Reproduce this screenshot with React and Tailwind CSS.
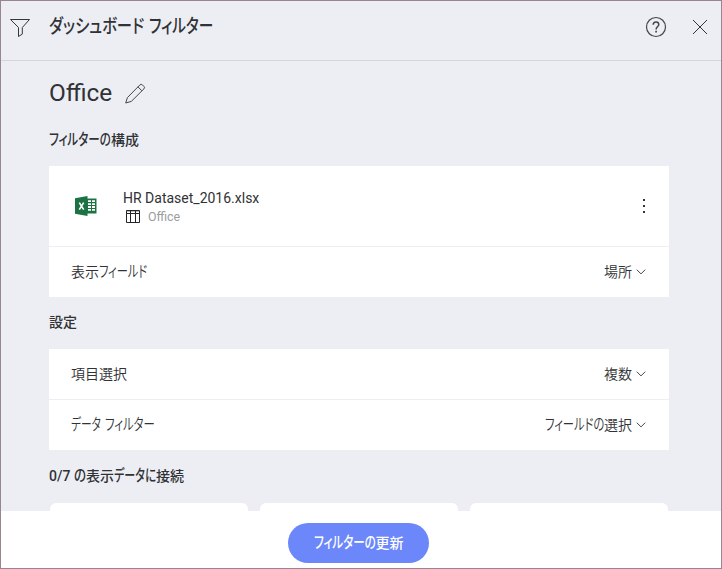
import { useLayoutEffect, useRef, useState } from "react";

// Each run of text is squeezed or stretched to its width.
function Run({ children, width, className = "" }) {
  const ref = useRef(null);
  const [scale, setScale] = useState(1);
  useLayoutEffect(() => {
    const measure = () => setScale(width / ref.current.offsetWidth);
    measure();
    document.fonts?.ready.then(measure);
  }, [width]);
  return (
    <span className="inline-block" style={{ width }}>
      <span ref={ref} className={`inline-block origin-left whitespace-nowrap ${className}`} style={{ transform: `scaleX(${scale})` }}>
        {children}
      </span>
    </span>
  );
}

// Kana is set taller and condensed beside kanji.
function Kana({ children, width }) {
  return (
    <Run width={width} className="text-[1.12em] [font-feature-settings:'palt']">
      {children}
    </Run>
  );
}

function Chevron() {
  return (
    <svg className="ml-1 h-[6px] w-[10px]" viewBox="0 0 10 6" fill="none" stroke="#444" strokeWidth="1">
      <path d="M.8.7 5 4.9 9.2.7" />
    </svg>
  );
}

function Row({ label, value }) {
  return (
    <div className="flex h-[50px] items-center justify-between pr-[23px] pl-[22px] text-[14px] font-[350]">
      <div className="flex">{label}</div>
      <div className="flex items-center">
        <div className="flex">{value}</div>
        <Chevron />
      </div>
    </div>
  );
}

export default function App() {
  return (
    <div className="flex h-[569px] w-[722px] flex-col overflow-hidden border border-[#9b8491] bg-[#edeef4] font-[Roboto,'Noto_Sans_CJK_JP',sans-serif] leading-5 text-[#303235]">
      <header className="flex h-[60px] shrink-0 items-start border-b border-[#d3d4dc] pt-[15px]">
        <svg className="mt-[2px] ml-[8px] h-[20px] w-[22px] shrink-0" viewBox="0 0 22 20" fill="none" stroke="#333538" strokeWidth="1">
          <path d="M1.5 1.5h19l-7.2 8v6.6l-3.8 2.4v-9z" strokeLinejoin="round" />
        </svg>
        <h1 className="mt-px ml-[18px] flex gap-[5px] text-[17px] font-medium">
          <Kana width={95}>ダッシュボード</Kana>
          <Kana width={64}>フィルター</Kana>
        </h1>
        <div className="ml-auto flex items-center pr-[13px]">
          <svg className="h-[22px] w-[22px]" viewBox="0 0 22 22" fill="none" stroke="#444649">
            <circle cx="11" cy="11" r="9.5" strokeWidth="1.2" />
            <path d="M8.200 8.800q0-2.800 2.800-2.800t2.800 2.600c0 2.100-2.700 2.400-2.700 4.800" strokeWidth="1.5" />
            <path d="M11.100 14.800v1.700" strokeWidth="1.7" />
          </svg>
          <svg className="ml-[25px] h-[16px] w-[16px]" viewBox="0 0 16 16" fill="none" stroke="#333538" strokeWidth="1">
            <path d="m1 1 14 14M15 1 1 15" />
          </svg>
        </div>
      </header>

      <main className="min-h-0 flex-1 overflow-hidden pr-[52px] pl-[48px]">
        <div className="flex h-[66px] items-start pt-[22px]">
          <h2 className="text-[24px]"><Run width={63}>Office</Run></h2>
          <svg className="ml-[13px] h-[21px] w-[21px]" viewBox="0 0 21 21" fill="none" stroke="#444649" strokeWidth="1" strokeLinejoin="round">
            <path d="m.7 20 1.7-5.400L14.900 1.900q1.300-1.200 2.500 0l1.500 1.500q1.300 1.300 0 2.500L6.300 18.400zM12.900 3.800 16.900 7.800" />
          </svg>
        </div>
        <h3 className="flex h-[39px] pt-[3px] text-[14px] font-medium">
          <Kana width={62}>フィルターの</Kana>
          <Run width={28}>構成</Run>
        </h3>

        <section className="h-[131px] bg-white">
          <div className="flex h-[81px] items-center border-b border-[#edeef4]">
            <svg className="ml-[26px] h-[20px] w-[22px] shrink-0" viewBox="0 0 22 20">
              <path d="M12 2.5h9.5v15H12z" fill="#1d7244" />
              <path d="M13 4.3h3v1.8h-3zm4 0h3v1.8h-3zM13 7.2h3V9h-3zm4 0h3V9h-3zm-4 2.9h3v1.8h-3zm4 0h3v1.8h-3zM13 13h3v1.8h-3zm4 0h3v1.8h-3z" fill="#fff" />
              <path d="M0 2.2 12.5 0v20L0 17.8z" fill="#1d7244" />
              <path d="m4.3 6.6 4.4 7m0-7-4.4 7" stroke="#fff" strokeWidth="1.6" />
            </svg>
            <div className="ml-[26px] pt-px">
              <div className="text-[14px]"><Run width={136}>HR Dataset_2016.xlsx</Run></div>
              <div className="flex h-[17px] items-center">
                <svg className="ml-[3px] h-[13px] w-[14px]" viewBox="0 0 14 13" fill="none" stroke="#222426" strokeWidth="1">
                  <path d="M.5.5h13v12H.5zM.5 3.5h13M4.5 1v11.500M9.500 1v11.500" />
                  <path d="M1 1.500h12" strokeOpacity=".3" />
                </svg>
                <span className="ml-[8px] text-[12px] text-[#9b9c9e]"><Run width={32}>Office</Run></span>
              </div>
            </div>
            <div className="mr-[24px] ml-auto flex flex-col gap-[4px]">
              <i className="h-[2px] w-[2px] bg-[#333538]" />
              <i className="h-[2px] w-[2px] bg-[#333538]" />
              <i className="h-[2px] w-[2px] bg-[#333538]" />
            </div>
          </div>
          <Row
            label={<><Run width={28}>表示</Run><Kana width={48}>フィールド</Kana></>}
            value={<Run width={28}>場所</Run>}
          />
        </section>

        <h3 className="h-[52px] pt-[15px] text-[14px] font-medium"><Run width={28}>設定</Run></h3>

        <section className="h-[101px] bg-white">
          <Row label={<Run width={56}>項目選択</Run>} value={<Run width={28}>複数</Run>} />
          <div className="h-px bg-[#edeef4]" />
          <Row
            label={<><Kana width={30}>データ</Kana><span className="w-[4px]" /><Kana width={50}>フィルター</Kana></>}
            value={<><Kana width={59}>フィールドの</Kana><Run width={28}>選択</Run></>}
          />
        </section>

        <h3 className="flex h-[53px] pt-[16px] text-[14px] font-medium">
          <Run width={21}>0/7</Run>
          <span className="w-[4px]" />
          <Kana width={12}>の</Kana>
          <Run width={28}>表示</Run>
          <Kana width={31}>データ</Kana>
          <Kana width={11}>に</Kana>
          <Run width={28}>接続</Run>
        </h3>
        <div className="grid h-[60px] grid-cols-3 gap-[12px] px-px">
          <div className="rounded-md bg-white" />
          <div className="rounded-md bg-white" />
          <div className="rounded-md bg-white" />
        </div>
      </main>

      <footer className="flex h-[57px] shrink-0 items-center justify-center bg-white pt-[7px] pr-[5px]">
        <button className="-mt-px flex h-[40px] w-[141px] items-center justify-center rounded-full bg-[#6b87fa] text-[14px] font-medium text-white">
          <Kana width={62}>フィルターの</Kana>
          <Run width={28}>更新</Run>
        </button>
      </footer>
    </div>
  );
}
